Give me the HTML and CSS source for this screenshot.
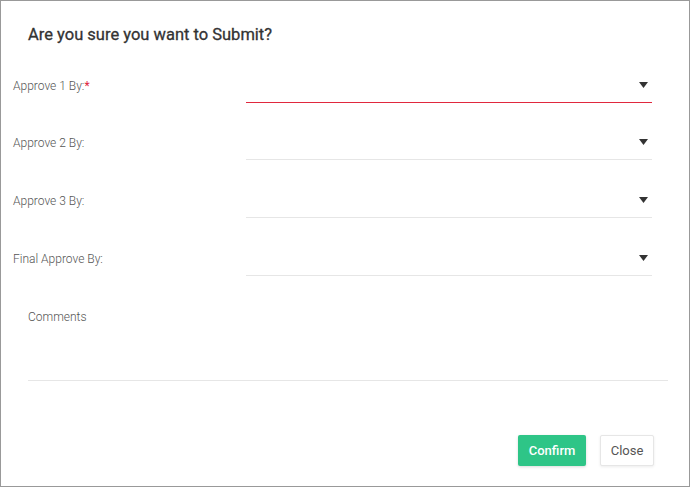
FILE: index.html
```
<!DOCTYPE html>
<html>
<head>
<meta charset="utf-8">
<link rel="stylesheet" href="styles.css">
</head>
<body>
<div class="dialog">
  <h2 class="title">Are you sure you want to Submit?</h2>
  <div class="form">
    <div class="row first">
      <label class="label">Approve 1 By:<span class="req">*</span></label>
      <div class="select invalid"><svg class="caret" width="9" height="6" viewBox="0 0 9 6"><path d="M0 0H9L4.5 6Z" fill="#333"/></svg></div>
    </div>
    <div class="row">
      <label class="label">Approve 2 By:</label>
      <div class="select"><svg class="caret" width="9" height="6" viewBox="0 0 9 6"><path d="M0 0H9L4.5 6Z" fill="#333"/></svg></div>
    </div>
    <div class="row">
      <label class="label">Approve 3 By:</label>
      <div class="select"><svg class="caret" width="9" height="6" viewBox="0 0 9 6"><path d="M0 0H9L4.5 6Z" fill="#333"/></svg></div>
    </div>
    <div class="row">
      <label class="label">Final Approve By:</label>
      <div class="select"><svg class="caret" width="9" height="6" viewBox="0 0 9 6"><path d="M0 0H9L4.5 6Z" fill="#333"/></svg></div>
    </div>
  </div>
  <div class="comments">
    <div class="comments-label">Comments</div>
  </div>
  <div class="actions">
    <button class="btn confirm">Confirm</button>
    <button class="btn close">Close</button>
  </div>
</div>
</body>
</html>
```
FILE: styles.css
```
* { box-sizing: border-box; }
html, body { margin: 0; padding: 0; background: #fff; }
body { font-family: Roboto, "Liberation Sans", sans-serif; }
.dialog {
  width: 690px;
  height: 487px;
  border: 1px solid #999;
  display: flex;
  flex-direction: column;
}
.title {
  margin: 0;
  padding: 22px 0 0 27px;
  font-size: 16.5px;
  line-height: 24px;
  font-weight: 400;
  color: #333;
  -webkit-text-stroke: 0.3px #333;
}
.form {
  display: flex;
  flex-direction: column;
  padding-top: 21px;
}
.row {
  display: flex;
  align-items: center;
  padding-left: 12px;
  margin-bottom: 23px;
}
.row.first { margin-bottom: 22px; }
.label {
  width: 233px;
  font-size: 12px;
  font-weight: 300;
  color: #555;
}
.req { color: #e0243c; font-weight: 400; }
.select {
  width: 406px;
  height: 35px;
  border-bottom: 1px solid #e6e6e6;
  display: flex;
  align-items: center;
  justify-content: flex-end;
  padding-right: 4px;
}
.select.invalid { border-bottom-color: #e0283e; }
.caret { display: block; }
.comments {
  margin: 10px 21px 0 27px;
  height: 72px;
  border-bottom: 1px solid #e6e6e6;
}
.comments-label {
  font-size: 12px;
  font-weight: 300;
  color: #555;
  line-height: 16px;
}
.actions {
  display: flex;
  justify-content: flex-end;
  gap: 14px;
  margin-top: 54px;
  padding-right: 35px;
}
.btn {
  height: 31px;
  font-family: Roboto, "Liberation Sans", sans-serif;
  font-size: 13px;
  border-radius: 2px;
  cursor: pointer;
}
.confirm {
  width: 68px;
  background: #2ec587;
  color: #fff;
  font-weight: 500;
  border: none;
  box-shadow: 0 1px 3px rgba(0,0,0,0.15);
}
.close {
  width: 54px;
  background: #fff;
  color: #555;
  border: 1px solid #e6e6e6;
  box-shadow: 0 1px 3px rgba(0,0,0,0.08);
}
```
